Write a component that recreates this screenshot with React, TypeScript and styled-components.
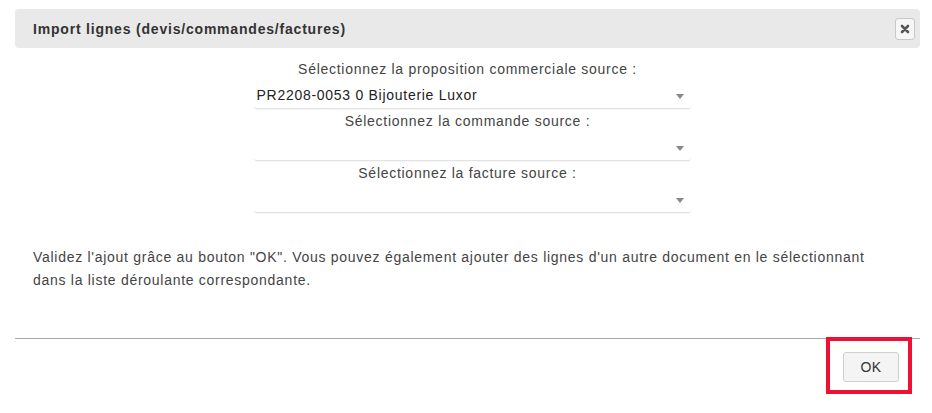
import React from 'react'
import styled, { createGlobalStyle } from 'styled-components'

const GlobalStyle = createGlobalStyle`
  html, body {
    margin: 0;
    padding: 0;
    background: #fff;
  }
  body {
    font-family: Arial, "Liberation Sans", Helvetica, sans-serif;
    font-size: 14px;
    letter-spacing: 0.72px;
    color: #333;
  }
  #root {
    min-height: 100vh;
  }
`

const Dialog = styled.div`
  margin: 9px 12px 0 15px;
  padding-bottom: 20px;
  width: 905px;
  display: flex;
  flex-direction: column;
`

const TitleBar = styled.div`
  height: 39px;
  box-sizing: border-box;
  display: flex;
  align-items: center;
  justify-content: space-between;
  padding: 0 5px 0 18px;
  background: #e9e9e9;
  border-radius: 4px;
`

const Title = styled.span`
  font-weight: bold;
  font-size: 14px;
  letter-spacing: 0.8px;
  color: #333;
`

const CloseButton = styled.button`
  width: 20px;
  height: 22px;
  box-sizing: border-box;
  padding: 0;
  margin-top: 1px;
  display: flex;
  align-items: center;
  justify-content: center;
  background: #f6f6f6;
  border: 1px solid #c8c8c8;
  border-radius: 3px;
  cursor: pointer;
`

const Content = styled.div`
  padding: 9px 18px 0;
`

const Form = styled.div`
  display: flex;
  flex-direction: column;
`

const Group = styled.div`
  display: flex;
  flex-direction: column;
`

const Label = styled.div`
  height: 22px;
  box-sizing: border-box;
  padding-top: 2px;
  line-height: 20px;
  text-align: center;
  color: #444;
`

const Select = styled.div`
  width: 437px;
  height: 30px;
  box-sizing: border-box;
  margin-left: calc(50% - 214px);
  padding: 4px 7px 1px 3px;
  display: flex;
  align-items: center;
  justify-content: space-between;
  line-height: 24px;
  color: #222;
  border-bottom: 1px solid #e2e2e2;
  border-radius: 0 0 3px 3px;
  box-shadow: 0 1px 0 rgba(0, 0, 0, 0.03);
`

const Arrow = styled.span`
  width: 0;
  height: 0;
  margin-top: 2px;
  border-left: 4px solid transparent;
  border-right: 4px solid transparent;
  border-top: 5px solid #888;
`

const Help = styled.p`
  margin: 33px 0 0;
  line-height: 23px;
  color: #444;
`

const Footer = styled.div`
  margin-top: 46px;
  border-top: 1px solid #aaa;
  display: flex;
  justify-content: flex-end;
  align-items: flex-start;
  padding: 13px 21px 0 0;
`

const ButtonWrap = styled.div`
  position: relative;
  display: flex;
`

const OkButton = styled.button`
  width: 56px;
  height: 30px;
  box-sizing: border-box;
  padding: 0;
  font-family: Arial, "Liberation Sans", Helvetica, sans-serif;
  font-size: 14px;
  letter-spacing: 0.5px;
  color: #333;
  background: #f4f4f4;
  border: 1px solid #cfcfcf;
  border-radius: 3px;
  cursor: pointer;
`

const Highlight = styled.span`
  position: absolute;
  left: -17px;
  right: -13px;
  top: -15px;
  bottom: -12px;
  border: 4px solid #ee1133;
  pointer-events: none;
`

const selects = [
  { label: 'Sélectionnez la proposition commerciale source :', value: 'PR2208-0053 0 Bijouterie Luxor' },
  { label: 'Sélectionnez la commande source :', value: '' },
  { label: 'Sélectionnez la facture source :', value: '' }
]

const CloseIcon = () => (
  <svg width="10" height="10" viewBox="0 0 10 10">
    <path d="M2 2 L8 8 M8 2 L2 8" stroke="#555" strokeWidth="2.6" strokeLinecap="round" />
  </svg>
)

const App = () => {
  return (
    <>
      <GlobalStyle />
      <Dialog>
        <TitleBar>
          <Title>Import lignes (devis/commandes/factures)</Title>
          <CloseButton aria-label="Fermer">
            <CloseIcon />
          </CloseButton>
        </TitleBar>
        <Content>
          <Form>
            {selects.map((item) => (
              <Group key={item.label}>
                <Label>{item.label}</Label>
                <Select>
                  <span>{item.value}</span>
                  <Arrow />
                </Select>
              </Group>
            ))}
          </Form>
          <Help>
            Validez l'ajout grâce au bouton "OK". Vous pouvez également ajouter des lignes d'un autre document en le
            sélectionnant dans la liste déroulante correspondante.
          </Help>
        </Content>
        <Footer>
          <ButtonWrap>
            <OkButton>OK</OkButton>
            <Highlight />
          </ButtonWrap>
        </Footer>
      </Dialog>
    </>
  )
}

export default App
